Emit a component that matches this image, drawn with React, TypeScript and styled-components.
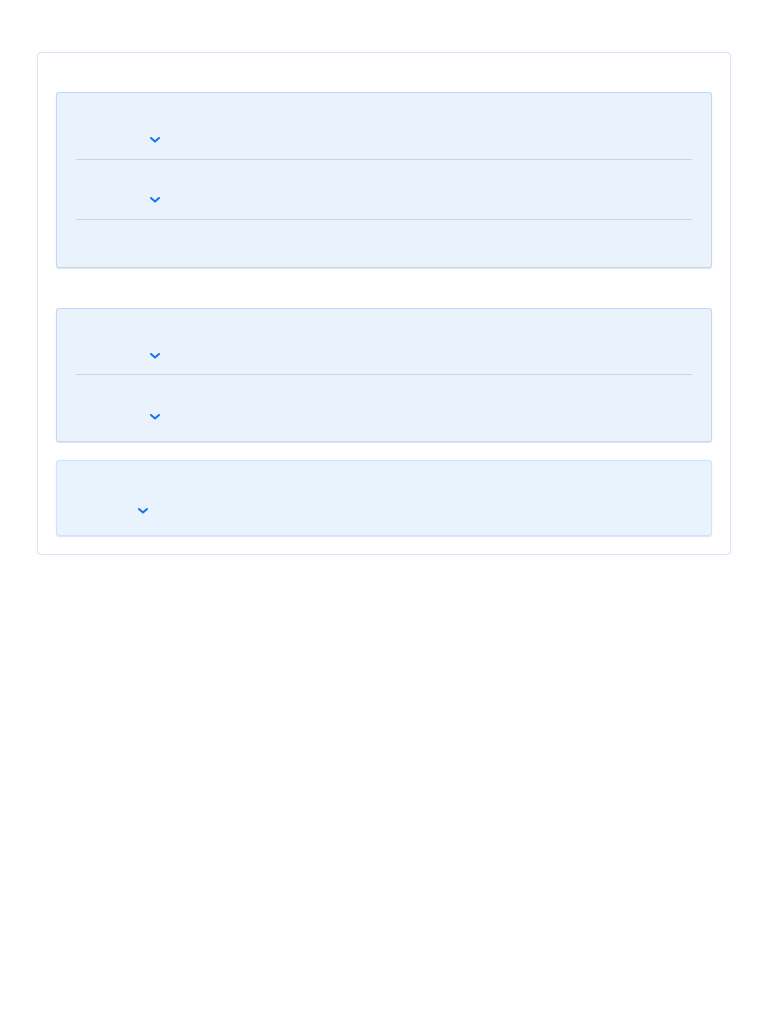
import React from 'react';
import styled, { createGlobalStyle } from 'styled-components';

const GlobalStyle = createGlobalStyle`
  body {
    margin: 0;
    background: #ffffff;
    font-family: "Noto Sans", "Liberation Sans", sans-serif;
  }
`;

const Page = styled.div`
  padding: 52px 37px 0 37px;
`;

const Card = styled.div`
  border: 1px solid #dfe3f1;
  border-radius: 4px;
  padding: 39px 18px 18px 18px;
  display: flex;
  flex-direction: column;
  box-shadow: 0 1px 2px rgba(180, 190, 220, 0.25);
`;

const Group = styled.div<{ $soft?: boolean; $gap?: number }>`
  background: ${(p) => (p.$soft ? '#e9f3fe' : '#eaf2fc')};
  border: 1px solid ${(p) => (p.$soft ? '#cfe2fa' : '#c6d6ee')};
  border-radius: 3px;
  padding: 0 19px;
  margin-top: ${(p) => p.$gap ?? 0}px;
  box-shadow: 0 1px 1px rgba(160, 180, 215, 0.35);
  display: flex;
  flex-direction: column;
`;

const Row = styled.div<{ $height: number; $pad?: number; $divider?: boolean }>`
  box-sizing: border-box;
  height: ${(p) => p.$height}px;
  border-bottom: ${(p) => (p.$divider ? '1px solid #c9d3e2' : 'none')};
  display: flex;
  align-items: flex-end;
  padding-bottom: ${(p) => p.$pad ?? 0}px;
`;

const Label = styled.span<{ $width: number }>`
  display: inline-block;
  width: ${(p) => p.$width}px;
  height: 16px;
  color: transparent;
`;

const Chevron = styled.svg`
  width: 10px;
  height: 6px;
  display: block;
`;

const Down = () => (
  <Chevron viewBox="0 0 10 6" fill="none">
    <path d="M1 1l4 3.6L9 1" stroke="#1a73e8" strokeWidth="2" strokeLinecap="round" strokeLinejoin="round" />
  </Chevron>
);

const Field = ({ width }: { width: number }) => (
  <>
    <Label $width={width} />
    <Down />
  </>
);

export default function App() {
  return (
    <>
      <GlobalStyle />
      <Page>
        <Card>
          <Group>
            <Row $height={67} $pad={16} $divider>
              <Field width={74} />
            </Row>
            <Row $height={60} $pad={16} $divider>
              <Field width={74} />
            </Row>
            <Row $height={47} />
          </Group>
          <Group $gap={40}>
            <Row $height={66} $pad={15} $divider>
              <Field width={74} />
            </Row>
            <Row $height={66} $pad={21}>
              <Field width={74} />
            </Row>
          </Group>
          <Group $soft $gap={18}>
            <Row $height={74} $pad={21}>
              <Field width={62} />
            </Row>
          </Group>
        </Card>
      </Page>
    </>
  );
}
